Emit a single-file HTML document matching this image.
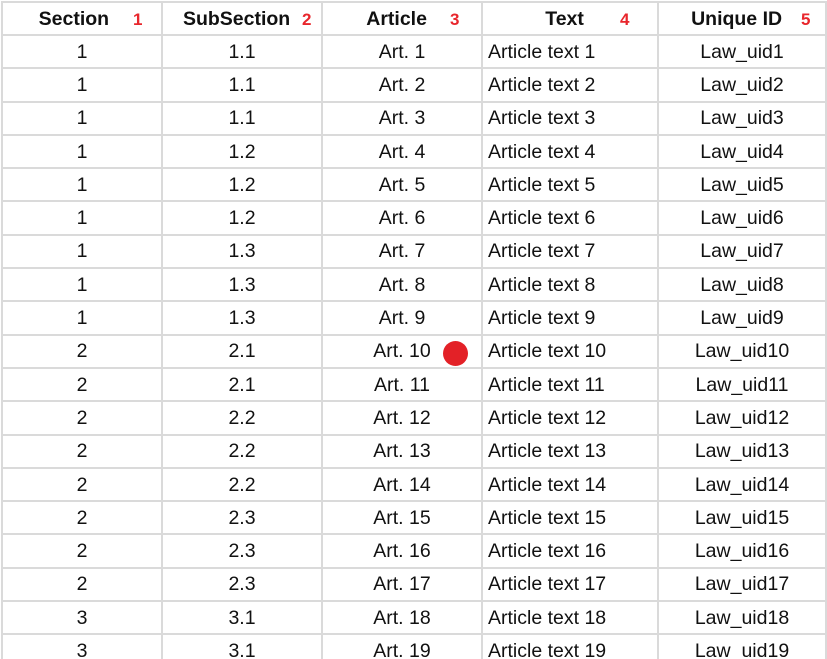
<!DOCTYPE html>
<html><head><meta charset="utf-8"><style>
html,body{margin:0;padding:0;background:#fff;width:827px;height:659px;overflow:hidden;position:relative}
table{position:absolute;left:1px;top:1px;border-collapse:collapse;font-family:"Liberation Sans",Arial,sans-serif;font-size:19.5px;line-height:20px;color:#111;table-layout:fixed}
td,th{border:2px solid #dadada;height:31.3px;padding:0;text-align:center;white-space:nowrap;overflow:hidden}
th{font-weight:bold;height:31px}
td.t{text-align:left;padding-left:5px}
.n{position:absolute;color:#e8262c;font-family:"Liberation Sans",Arial,sans-serif;font-weight:bold;font-size:17px;top:10px}
.dot{position:absolute;left:443px;top:341px;width:25px;height:25px;border-radius:50%;background:#e32127}
</style></head><body>
<table>
<colgroup><col style="width:160px"><col style="width:160px"><col style="width:160px"><col style="width:176px"><col style="width:168px"></colgroup>
<tr><th>Section&nbsp;&nbsp;&nbsp;</th><th>SubSection&nbsp;&nbsp;</th><th>Article&nbsp;&nbsp;</th><th>Text&nbsp;&nbsp;</th><th>Unique ID&nbsp;&nbsp;</th></tr>
<tr><td>1</td><td>1.1</td><td>Art. 1</td><td class="t">Article text 1</td><td>Law_uid1</td></tr>
<tr><td>1</td><td>1.1</td><td>Art. 2</td><td class="t">Article text 2</td><td>Law_uid2</td></tr>
<tr><td>1</td><td>1.1</td><td>Art. 3</td><td class="t">Article text 3</td><td>Law_uid3</td></tr>
<tr><td>1</td><td>1.2</td><td>Art. 4</td><td class="t">Article text 4</td><td>Law_uid4</td></tr>
<tr><td>1</td><td>1.2</td><td>Art. 5</td><td class="t">Article text 5</td><td>Law_uid5</td></tr>
<tr><td>1</td><td>1.2</td><td>Art. 6</td><td class="t">Article text 6</td><td>Law_uid6</td></tr>
<tr><td>1</td><td>1.3</td><td>Art. 7</td><td class="t">Article text 7</td><td>Law_uid7</td></tr>
<tr><td>1</td><td>1.3</td><td>Art. 8</td><td class="t">Article text 8</td><td>Law_uid8</td></tr>
<tr><td>1</td><td>1.3</td><td>Art. 9</td><td class="t">Article text 9</td><td>Law_uid9</td></tr>
<tr><td>2</td><td>2.1</td><td>Art. 10</td><td class="t">Article text 10</td><td>Law_uid10</td></tr>
<tr><td>2</td><td>2.1</td><td>Art. 11</td><td class="t">Article text 11</td><td>Law_uid11</td></tr>
<tr><td>2</td><td>2.2</td><td>Art. 12</td><td class="t">Article text 12</td><td>Law_uid12</td></tr>
<tr><td>2</td><td>2.2</td><td>Art. 13</td><td class="t">Article text 13</td><td>Law_uid13</td></tr>
<tr><td>2</td><td>2.2</td><td>Art. 14</td><td class="t">Article text 14</td><td>Law_uid14</td></tr>
<tr><td>2</td><td>2.3</td><td>Art. 15</td><td class="t">Article text 15</td><td>Law_uid15</td></tr>
<tr><td>2</td><td>2.3</td><td>Art. 16</td><td class="t">Article text 16</td><td>Law_uid16</td></tr>
<tr><td>2</td><td>2.3</td><td>Art. 17</td><td class="t">Article text 17</td><td>Law_uid17</td></tr>
<tr><td>3</td><td>3.1</td><td>Art. 18</td><td class="t">Article text 18</td><td>Law_uid18</td></tr>
<tr><td>3</td><td>3.1</td><td>Art. 19</td><td class="t">Article text 19</td><td>Law_uid19</td></tr>
</table>
<span class="n" style="left:133px">1</span>
<span class="n" style="left:302px">2</span>
<span class="n" style="left:450px">3</span>
<span class="n" style="left:620px">4</span>
<span class="n" style="left:801px">5</span>
<div class="dot"></div>
</body></html>
